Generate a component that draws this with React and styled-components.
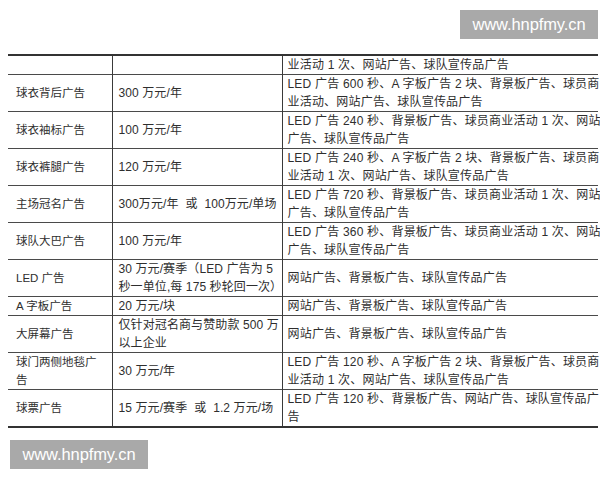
import React from 'react';
import styled, { createGlobalStyle } from 'styled-components';

const GlobalStyle = createGlobalStyle`
  html, body {
    margin: 0;
    padding: 0;
    background: #fff;
  }
  body {
    font-family: "Liberation Sans", "Noto Sans CJK SC", sans-serif;
  }
`;

const Page = styled.div`
  width: 600px;
  height: 480px;
  padding-left: 8px;
  box-sizing: border-box;
  overflow: hidden;
`;

const Header = styled.div`
  display: flex;
  justify-content: flex-end;
  padding: 10px 2px 0 0;
`;

const Footer = styled.div`
  display: flex;
  padding: 12px 0 0 2px;
`;

const Watermark = styled.div`
  width: 138px;
  height: 29px;
  display: flex;
  align-items: center;
  justify-content: center;
  background: #a9a9a9;
  color: #fff;
  font-family: "Liberation Sans", Arial, sans-serif;
  font-size: 16.5px;
  letter-spacing: -0.1px;
`;

const Table = styled.table`
  width: 590px;
  margin-top: 15px;
  border-collapse: collapse;
  table-layout: fixed;
  border-top: 2px solid #333;
  border-bottom: 2px solid #333;
  color: #2e2e2e;
  font-size: 12px;
`;

const Row = styled.tr`
  & + & {
    border-top: 1px solid #4a4a4a;
  }
`;

const Cell = styled.td`
  padding: 0 0 0 ${(p) => p.$indent}px;
  font-size: ${(p) => p.$size || 12}px;
  letter-spacing: ${(p) => p.$spacing || 0}px;
  line-height: 18px;
  vertical-align: middle;
  white-space: pre;
  & + & {
    border-left: 1px solid #3a3a3a;
  }
`;

const Line = styled.span`
  display: block;
`;

const rows = [
  { name: [''], price: [''], perks: ['业活动 1 次、网站广告、球队宣传品广告'] },
  {
    name: ['球衣背后广告'],
    price: ['300 万元/年'],
    perks: ['LED 广告 600 秒、A 字板广告 2 块、背景板广告、球员商', '业活动、网站广告、球队宣传品广告'],
  },
  {
    name: ['球衣袖标广告'],
    price: ['100 万元/年'],
    perks: ['LED 广告 240 秒、背景板广告、球员商业活动 1 次、网站', '广告、球队宣传品广告'],
  },
  {
    name: ['球衣裤腿广告'],
    price: ['120 万元/年'],
    perks: ['LED 广告 240 秒、A 字板广告 2 块、背景板广告、球员商', '业活动 1 次、网站广告、球队宣传品广告'],
  },
  {
    name: ['主场冠名广告'],
    price: ['300万元/年  或  100万元/单场'],
    perks: ['LED 广告 720 秒、背景板广告、球员商业活动 1 次、网站', '广告、球队宣传品广告'],
  },
  {
    name: ['球队大巴广告'],
    price: ['100 万元/年'],
    perks: ['LED 广告 360 秒、背景板广告、球员商业活动 1 次、网站', '广告、球队宣传品广告'],
  },
  {
    name: ['LED 广告'],
    price: ['30 万元/赛季（LED 广告为 5', '秒一单位,每 175 秒轮回一次）'],
    perks: ['网站广告、背景板广告、球队宣传品广告'],
  },
  {
    name: ['A 字板广告'],
    price: ['20 万元/块'],
    perks: ['网站广告、背景板广告、球队宣传品广告'],
  },
  {
    name: ['大屏幕广告'],
    price: ['仅针对冠名商与赞助款 500 万', '以上企业'],
    perks: ['网站广告、背景板广告、球队宣传品广告'],
  },
  {
    name: ['球门两侧地毯广', '告'],
    price: ['30 万元/年'],
    perks: ['LED 广告 120 秒、A 字板广告 2 块、背景板广告、球员商', '业活动 1 次、网站广告、球队宣传品广告'],
  },
  {
    name: ['球票广告'],
    price: ['15 万元/赛季  或  1.2 万元/场'],
    perks: ['LED 广告 120 秒、背景板广告、网站广告、球队宣传品广', '告'],
  },
];

function Lines({ items }) {
  return items.map((text, i) => <Line key={i}>{text || '\u00a0'}</Line>);
}

export default function App() {
  return (
    <Page>
      <GlobalStyle />
      <Header>
        <Watermark>www.hnpfmy.cn</Watermark>
      </Header>
      <Table>
        <colgroup>
          <col style={{ width: 104 }} />
          <col style={{ width: 170 }} />
          <col style={{ width: 316 }} />
        </colgroup>
        <tbody>
          {rows.map((row, i) => (
            <Row key={i}>
              <Cell $indent={8} $size={11.5}><Lines items={row.name} /></Cell>
              <Cell $indent={6} $spacing={0.1}><Lines items={row.price} /></Cell>
              <Cell $indent={5} $spacing={0.2}><Lines items={row.perks} /></Cell>
            </Row>
          ))}
        </tbody>
      </Table>
      <Footer>
        <Watermark>www.hnpfmy.cn</Watermark>
      </Footer>
    </Page>
  );
}
